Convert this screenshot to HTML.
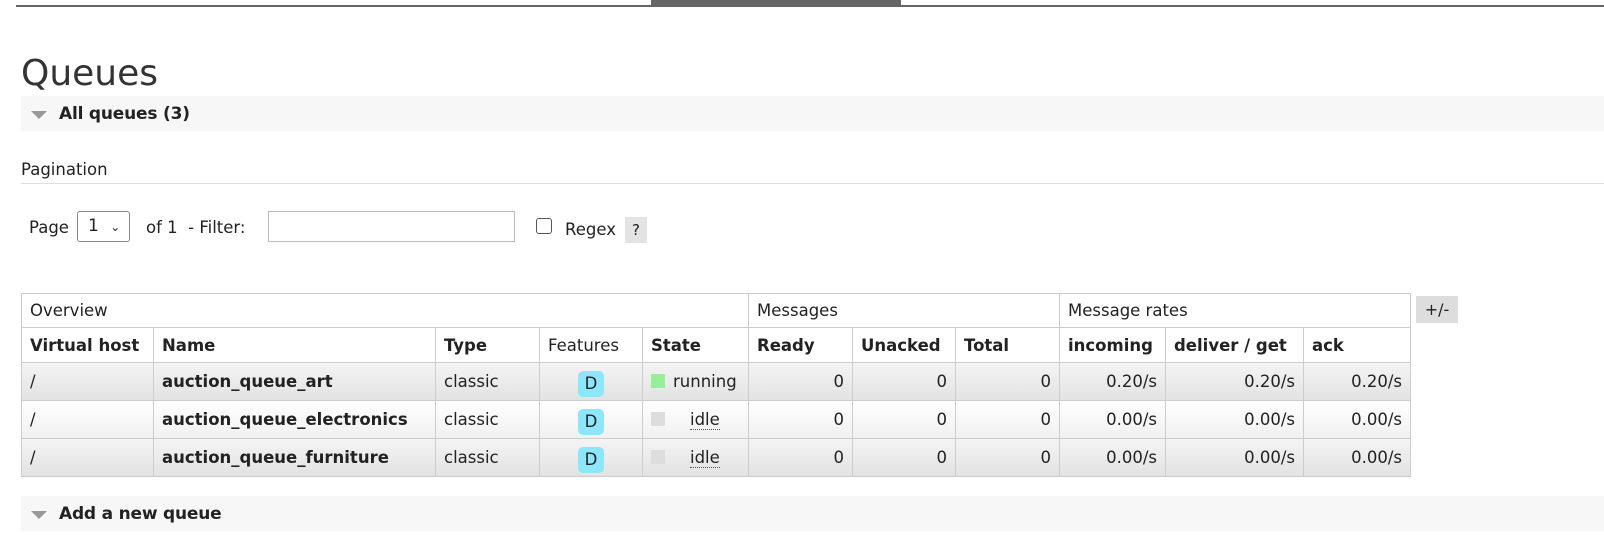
<!DOCTYPE html><html><head><style>
body{margin:0;width:1604px;height:550px;background:#fff;font-family:"DejaVu Sans",Verdana,sans-serif;color:#222;position:relative;overflow:hidden}
.a{position:absolute}
.bar{position:absolute;left:21px;right:0;height:35px;background:#f7f7f7;font-weight:bold;font-size:17px;line-height:37px}
.bar span.t{position:absolute;left:10px;top:15px;width:0;height:0;border-left:8px solid transparent;border-right:8px solid transparent;border-top:8px solid #999}
.bar b{position:absolute;left:38px;letter-spacing:-0.2px}
table{position:absolute;left:21px;top:293px;border-collapse:collapse;font-size:16.5px;table-layout:fixed;width:1389px}
td,th{border:1px solid #ccc;padding:0 8px;white-space:nowrap;overflow:hidden}
th{text-align:left}
.h1 td{height:33px}
.h2 th{height:34px;font-weight:bold}
.r td{height:37px}
.g{background:linear-gradient(#f4f4f4,#e2e2e2)}
.w{background:linear-gradient(#fff,#f0f0f0)}
.n{text-align:right}
.D{display:inline-block;background:#8ee6fa;border-radius:5px;width:26px;height:26px;line-height:26px;text-align:center;margin-top:5px}
.sq{display:inline-block;width:14px;height:14px;vertical-align:-1px;margin-right:8px}
.f{font-size:16.5px}
</style></head><body>
<div class="a" style="left:16px;right:0;top:5px;height:2px;background:#666"></div>
<div class="a" style="left:651px;width:250px;top:0;height:6px;background:#666"></div>
<div class="a" style="left:21px;top:53px;font-size:36px;color:#333">Queues</div>
<div class="bar" style="top:96px"><span class="t"></span><b>All queues (3)</b></div>
<div class="a f" style="left:21px;top:160px">Pagination</div>
<div class="a" style="left:21px;right:0;top:183px;height:1px;background:#ddd"></div>
<div class="a f" style="left:29px;top:218px">Page</div>
<div class="a" style="left:77px;top:211px;width:53px;height:31px;border:1px solid #888;border-radius:3px;box-sizing:border-box;font-size:17px;line-height:29px;padding-left:10px">1 <span style="font-size:12px;margin-left:6px">&#8964;</span></div>
<div class="a f" style="left:146px;top:218px">of 1 &nbsp;- Filter:</div>
<div class="a" style="left:268px;top:211px;width:247px;height:31px;border:1px solid #bbb;box-sizing:border-box"></div>
<div class="a" style="left:536px;top:218px;width:16px;height:16px;border:1px solid #555;border-radius:3px;box-sizing:border-box"></div>
<div class="a f" style="left:565px;top:220px">Regex</div>
<div class="a" style="left:625px;top:217px;width:22px;height:26px;background:#e4e4e4;font-size:15px;text-align:center;line-height:26px">?</div>
<table>
<colgroup><col style="width:132px"><col style="width:282px"><col style="width:104px"><col style="width:103px"><col style="width:106px"><col style="width:104px"><col style="width:103px"><col style="width:104px"><col style="width:106px"><col style="width:138px"><col style="width:107px"></colgroup>
<tr class="h1"><td colspan="5">Overview</td><td colspan="3">Messages</td><td colspan="3">Message rates</td></tr>
<tr class="h2"><th>Virtual host</th><th>Name</th><th>Type</th><th style="font-weight:normal">Features</th><th>State</th><th>Ready</th><th>Unacked</th><th>Total</th><th>incoming</th><th>deliver / get</th><th>ack</th></tr>
<tr class="r g"><td>/</td><td><b>auction_queue_art</b></td><td>classic</td><td style="text-align:center"><span class="D">D</span></td><td><span class="sq" style="background:#99ee99"></span>running</td><td class="n">0</td><td class="n">0</td><td class="n">0</td><td class="n">0.20/s</td><td class="n">0.20/s</td><td class="n">0.20/s</td></tr>
<tr class="r w"><td>/</td><td><b>auction_queue_electronics</b></td><td>classic</td><td style="text-align:center"><span class="D">D</span></td><td><span class="sq" style="background:#ddd"></span><span style="margin-left:17px;border-bottom:1px dotted #555">idle</span></td><td class="n">0</td><td class="n">0</td><td class="n">0</td><td class="n">0.00/s</td><td class="n">0.00/s</td><td class="n">0.00/s</td></tr>
<tr class="r g"><td>/</td><td><b>auction_queue_furniture</b></td><td>classic</td><td style="text-align:center"><span class="D">D</span></td><td><span class="sq" style="background:#ddd"></span><span style="margin-left:17px;border-bottom:1px dotted #555">idle</span></td><td class="n">0</td><td class="n">0</td><td class="n">0</td><td class="n">0.00/s</td><td class="n">0.00/s</td><td class="n">0.00/s</td></tr>
</table>
<div class="a" style="left:1416px;top:296px;width:42px;height:27px;background:#ddd;text-align:center;line-height:27px;font-size:16px">+/-</div>
<div class="bar" style="top:496px"><span class="t"></span><b>Add a new queue</b></div>
</body></html>
